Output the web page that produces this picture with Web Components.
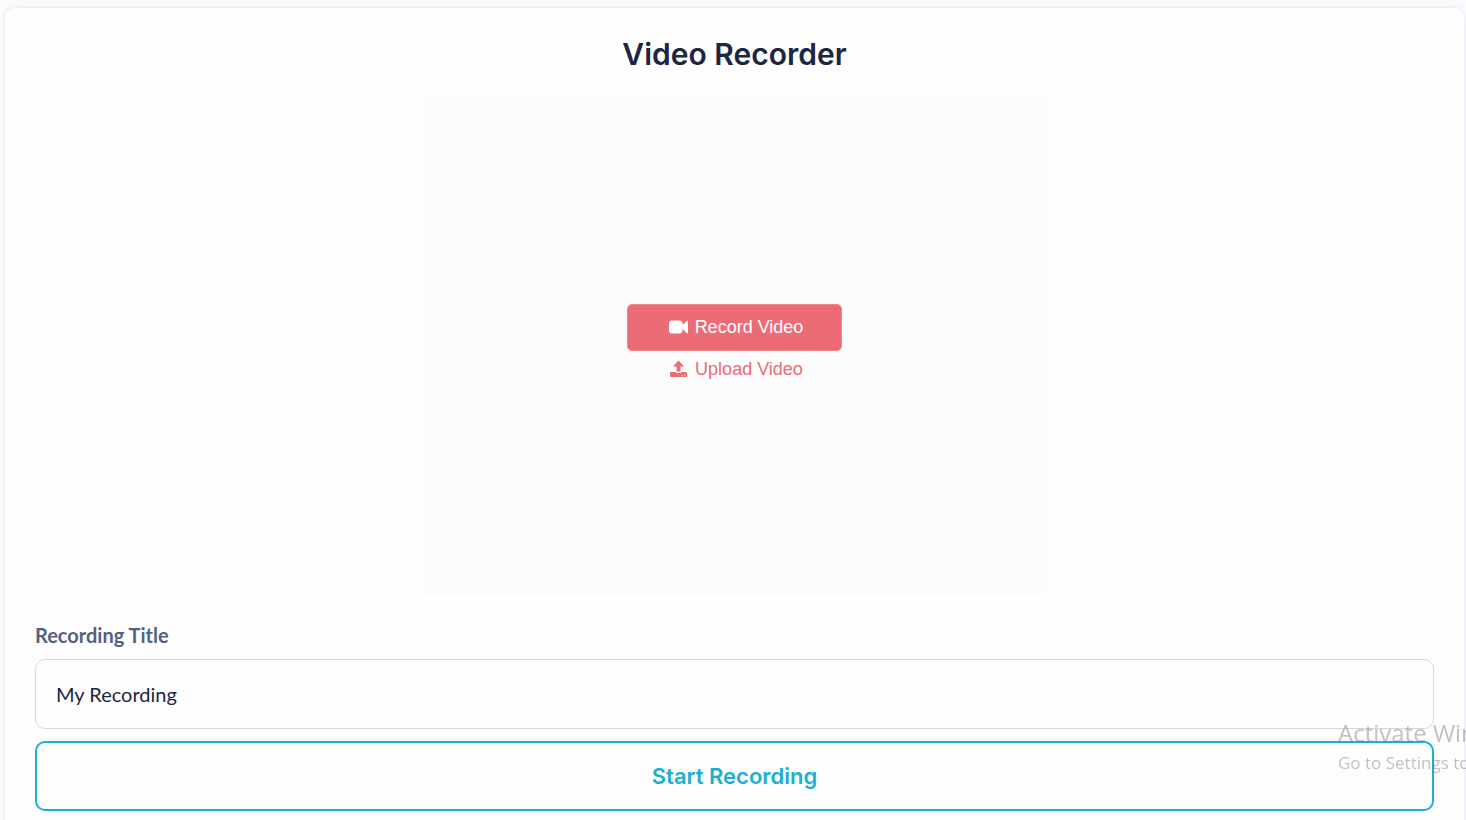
<!DOCTYPE html>
<html lang="en">
<head>
    <meta charset="UTF-8">
    <meta name="viewport" content="width=device-width, initial-scale=1.0">
    <title>Video Recorder</title>
    <style>
        body {
            margin: 0;
            padding: 8px 2px 0 5px;
            background: #fafbfd;
            font-family: Lato, "Liberation Sans", sans-serif;
            color: #1b2742;
        }
    </style>
</head>
<body>
    <recorder-card heading="Video Recorder">
        <video-stage></video-stage>
        <title-field label="Recording Title" value="My Recording"></title-field>
        <outline-button>Start Recording</outline-button>
    </recorder-card>
    <system-notice>
        <span slot="title">Activate Windows</span>
        <span slot="text">Go to Settings to activate Windows.</span>
    </system-notice>

    <script>
        class RecorderCard extends HTMLElement {
            connectedCallback() {
                this.attachShadow({ mode: 'open' });
                this.shadowRoot.innerHTML = `
                    <style>
                        :host {
                            display: block;
                            padding: 28px 30px 32px;
                            box-sizing: border-box;
                            background: #fefefe;
                            border-radius: 10px;
                            box-shadow: 0 0 3px rgba(60, 80, 140, 0.12), 0 0 12px rgba(60, 80, 140, 0.04);
                        }
                        h1 {
                            margin: 0 0 24px;
                            font: 600 30px/36px Inter, sans-serif;
                            text-align: center;
                        }
                    </style>
                    <h1>${this.getAttribute('heading')}</h1>
                    <slot></slot>
                `;
            }
        }

        class VideoStage extends HTMLElement {
            connectedCallback() {
                this.attachShadow({ mode: 'open' });
                this.shadowRoot.innerHTML = `
                    <style>
                        :host {
                            display: flex;
                            flex-direction: column;
                            align-items: center;
                            justify-content: center;
                            box-sizing: border-box;
                            max-width: 625px;
                            height: 500px;
                            margin: 0 auto 26px;
                            padding-bottom: 2px;
                            background: #fcfcfc;
                        }
                        button {
                            display: flex;
                            align-items: center;
                            justify-content: center;
                            gap: 7px;
                            box-sizing: border-box;
                            width: 215px;
                            padding: 0 0 0 3px;
                            border: 0;
                            background: none;
                            color: #ed6b75;
                            font: 18px/36px "Liberation Sans", Arial, sans-serif;
                            cursor: pointer;
                        }
                        .record {
                            height: 47px;
                            border: 1px solid #f0868e;
                            border-radius: 5px;
                            background: #ed6b75;
                            color: #fff;
                        }
                        svg {
                            display: block;
                            width: 19px;
                            height: 18px;
                            fill: currentColor;
                        }
                    </style>
                    <button class="record" type="button">
                        <svg viewBox="0 0 19 18" aria-hidden="true">
                            <path d="M3 2.500H10.500Q13.500 2.500 13.500 5.500V7L18 2.800Q19 2.200 19 3.300V14.700Q19 15.800 18 15.200L13.500 11V12.500Q13.500 15.500 10.500 15.500H3Q0 15.500 0 12.500V5.500Q0 2.500 3 2.500Z"/>
                        </svg>
                        Record Video
                    </button>
                    <button type="button">
                        <svg viewBox="0 0 19 18" aria-hidden="true">
                            <path d="M9.500 .5L15 6.500H11.500V11.500H7.500V6.500H4Z"/>
                            <path fill-rule="evenodd" d="M2 12H6.500Q7 13 8 13H11Q12 13 12.500 12H17Q18 12 18 13V16Q18 17 17 17H2Q1 17 1 16V13Q1 12 2 12ZM12.500 14.800V15.800H13.500V14.800ZM15.200 14.800V15.800H16.200V14.800Z"/>
                        </svg>
                        Upload Video
                    </button>
                `;
            }
        }

        class TitleField extends HTMLElement {
            connectedCallback() {
                this.attachShadow({ mode: 'open' });
                this.shadowRoot.innerHTML = `
                    <style>
                        :host {
                            display: block;
                            margin-bottom: 12px;
                        }
                        label {
                            display: block;
                            margin-bottom: 10px;
                            color: #53627f;
                            font-size: 20px;
                            font-weight: 700;
                            line-height: 27px;
                        }
                        input {
                            display: block;
                            box-sizing: border-box;
                            width: 100%;
                            height: 70px;
                            padding: 0 20px;
                            border: 1px solid #d5d5e0;
                            border-radius: 10px;
                            outline: none;
                            background: #fefefe;
                            color: inherit;
                            font: inherit;
                            font-size: 20px;
                        }
                    </style>
                    <label for="title">${this.getAttribute('label')}</label>
                    <input id="title" type="text" value="${this.getAttribute('value')}">
                `;
            }
        }

        class OutlineButton extends HTMLElement {
            connectedCallback() {
                this.attachShadow({ mode: 'open' });
                this.shadowRoot.innerHTML = `
                    <style>
                        :host {
                            display: block;
                        }
                        button {
                            width: 100%;
                            height: 70px;
                            padding: 0;
                            border: 2px solid #1dafd0;
                            border-radius: 10px;
                            background: #fefefe;
                            color: #1dafd0;
                            font: 600 22px/28px Inter, sans-serif;
                            cursor: pointer;
                        }
                    </style>
                    <button type="button"><slot></slot></button>
                `;
            }
        }

        // Overlay that runs off the right edge of the screen
        class SystemNotice extends HTMLElement {
            connectedCallback() {
                this.attachShadow({ mode: 'open' });
                this.shadowRoot.innerHTML = `
                    <style>
                        :host {
                            position: fixed;
                            right: 0;
                            bottom: 44px;
                            width: 128px;
                            overflow: hidden;
                            white-space: nowrap;
                            color: rgba(120, 120, 120, 0.45);
                            font-family: "Open Sans", "Noto Sans", sans-serif;
                            pointer-events: none;
                        }
                        .title {
                            font-size: 24px;
                            line-height: 32px;
                        }
                        .text {
                            font-size: 17px;
                            line-height: 27px;
                        }
                    </style>
                    <div class="title"><slot name="title"></slot></div>
                    <div class="text"><slot name="text"></slot></div>
                `;
            }
        }

        customElements.define('recorder-card', RecorderCard);
        customElements.define('video-stage', VideoStage);
        customElements.define('title-field', TitleField);
        customElements.define('outline-button', OutlineButton);
        customElements.define('system-notice', SystemNotice);
    </script>
</body>
</html>
